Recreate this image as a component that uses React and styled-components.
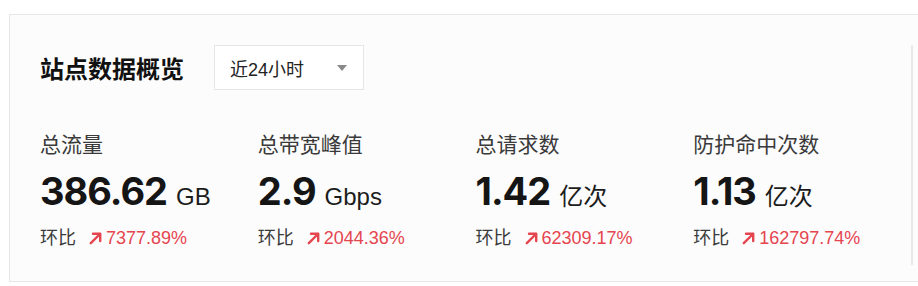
import React from 'react';
import styled, { createGlobalStyle } from 'styled-components';

const GlobalStyle = createGlobalStyle`
  html, body {
    margin: 0;
    padding: 0;
    background: #ffffff;
    overflow: hidden;
  }
  body {
    font-family: "Liberation Sans", "Noto Sans CJK SC", sans-serif;
  }
`;

const Page = styled.div`
  padding: 14px 0 0 9px;
`;

const Card = styled.section`
  width: 940px;
  height: 268px;
  box-sizing: border-box;
  background: #fcfcfc;
  border: 1px solid #e6e6eb;
  padding: 30px 0 16px 30px;
`;

const Body = styled.div`
  width: 873px;
  height: 220px;
  box-sizing: border-box;
  border-right: 2px solid #e6e8ec;
`;

const Header = styled.div`
  display: flex;
  align-items: center;
  gap: 30px;
  height: 45px;
`;

const Title = styled.h2`
  margin: 0;
  font-family: "Noto Sans CJK SC", sans-serif;
  font-size: 24px;
  font-weight: 700;
  color: #111;
`;

const Select = styled.div`
  width: 150px;
  height: 45px;
  box-sizing: border-box;
  border: 1px solid #e6e6e6;
  background: #fff;
  display: flex;
  align-items: center;
  justify-content: space-between;
  padding: 0 16px 0 15px;
  font-size: 18px;
  color: #222;
`;

const Caret = styled.span`
  width: 0;
  height: 0;
  border-left: 5px solid transparent;
  border-right: 5px solid transparent;
  border-top: 6px solid #8a8a8a;
`;

const Stats = styled.div`
  display: grid;
  grid-template-columns: repeat(4, 1fr);
  margin-top: 41px;
`;

const Stat = styled.div`
  display: flex;
  flex-direction: column;
`;

const Label = styled.div`
  font-size: 21px;
  line-height: 28px;
  color: #3a3a3a;
`;

const ValueRow = styled.div`
  display: flex;
  align-items: baseline;
  gap: 9px;
  margin-top: 8px;
  line-height: 48px;
`;

const Number = styled.span`
  font-family: Inter, "Liberation Sans", sans-serif;
  font-size: 38px;
  font-weight: 700;
  color: #151515;
  letter-spacing: -1px;
`;

const Unit = styled.span`
  font-size: 24px;
  color: #1c1c1c;
`;

const Change = styled.div`
  display: flex;
  align-items: center;
  margin-top: 4px;
  font-size: 18px;
  line-height: 26px;
  color: #3a3a3a;
`;

const Trend = styled.span`
  display: inline-flex;
  align-items: center;
  margin-left: 13px;
  gap: 4px;
  color: #e5454f;

  svg {
    flex: none;
  }
`;

const TrendArrow = () => (
  <svg width="13" height="13" viewBox="0 0 13 13" fill="none" stroke="currentColor" strokeWidth="2.4" strokeLinecap="round" strokeLinejoin="round">
    <path d="M1.8 11.2L11 2" />
    <path d="M4 1.8H11.2V9" />
  </svg>
);

const stats = [
  { label: '总流量', value: '386.62', unit: 'GB', change: '7377.89%' },
  { label: '总带宽峰值', value: '2.9', unit: 'Gbps', change: '2044.36%' },
  { label: '总请求数', value: '1.42', unit: '亿次', change: '62309.17%' },
  { label: '防护命中次数', value: '1.13', unit: '亿次', change: '162797.74%' },
];

export default function App() {
  return (
    <>
      <GlobalStyle />
      <Page>
        <Card>
          <Body>
            <Header>
              <Title>站点数据概览</Title>
              <Select>
                <span>近24小时</span>
                <Caret />
              </Select>
            </Header>
            <Stats>
              {stats.map(s => (
                <Stat key={s.label}>
                  <Label>{s.label}</Label>
                  <ValueRow>
                    <Number>{s.value}</Number>
                    <Unit>{s.unit}</Unit>
                  </ValueRow>
                  <Change>
                    环比
                    <Trend>
                      <TrendArrow />
                      {s.change}
                    </Trend>
                  </Change>
                </Stat>
              ))}
            </Stats>
          </Body>
        </Card>
      </Page>
    </>
  );
}
